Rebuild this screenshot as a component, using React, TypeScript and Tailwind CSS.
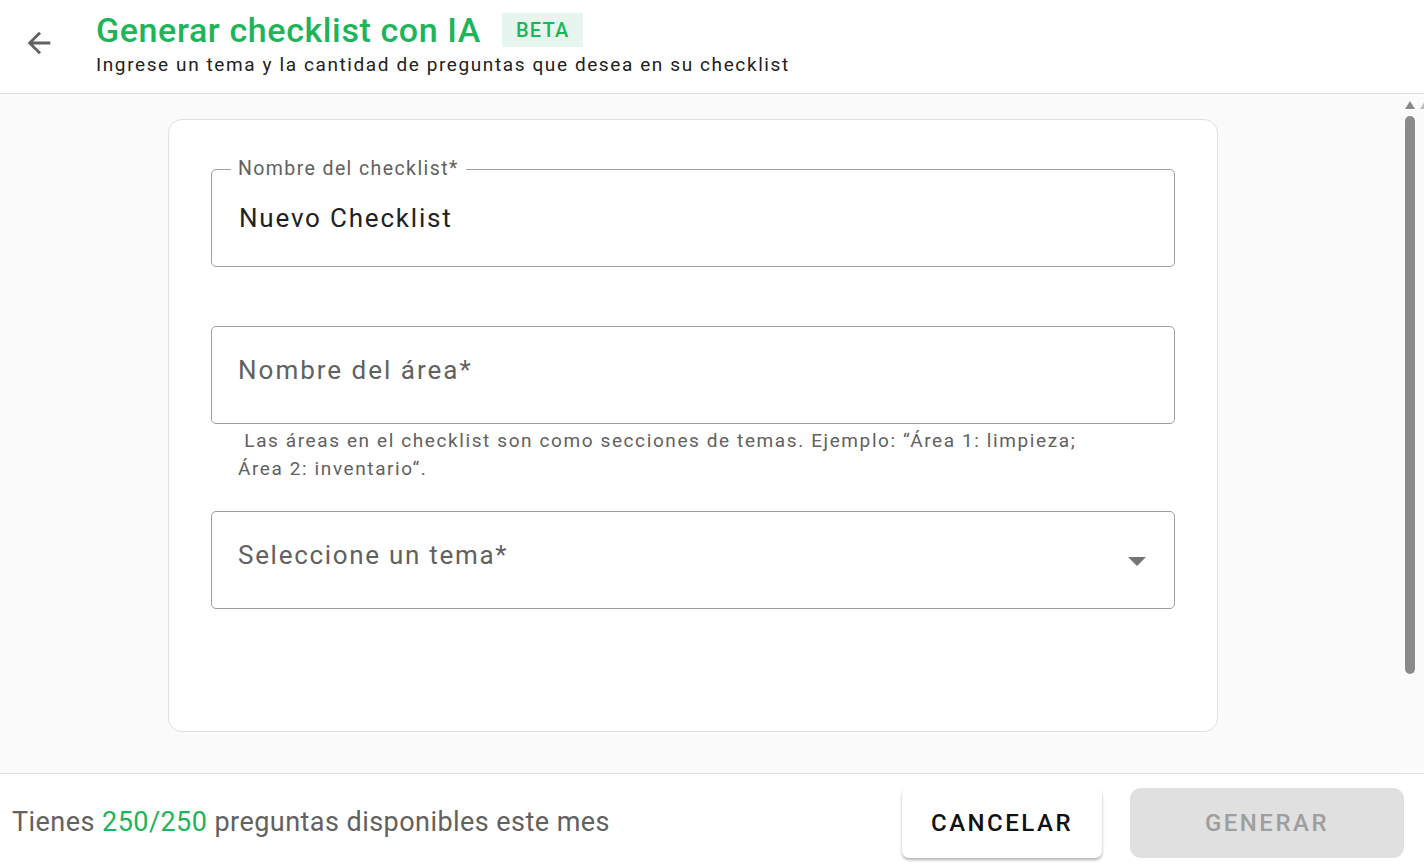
import React from 'react';

const green = 'text-[#1db45a]';

const ArrowBack = () => (
  <svg width="34" height="34" viewBox="0 0 24 24" fill="#616161">
    <path d="M20 11H7.83l5.59-5.59L12 4l-8 8 8 8 1.41-1.41L7.83 13H20v-2z" />
  </svg>
);

export default function App() {
  return (
    <div className="h-[866px] w-full flex flex-col bg-white font-['Roboto',sans-serif] overflow-hidden">
      {/* header */}
      <div className="h-[94px] shrink-0 flex items-start border-b border-[#e0e0e0]">
        <div className="pl-[22px] pt-[26px]">
          <ArrowBack />
        </div>
        <div className="pl-[40px] pt-[9px]">
          <div className="flex items-center gap-[21px]">
            <h1 className={`text-[34px] leading-[42px] font-medium tracking-[0.6px] ${green}`}>Generar checklist con IA</h1>
            <span className="px-[14px] h-[34px] flex items-center bg-[#e6f6ee] text-[20px] font-medium tracking-[1.2px] text-[#1db45a]">
              BETA
            </span>
          </div>
          <p className="text-[19px] leading-[26px] tracking-[1.6px] text-[#212121] mt-[1px]">
            Ingrese un tema y la cantidad de preguntas que desea en su checklist
          </p>
        </div>
      </div>

      {/* main */}
      <div className="relative flex-1 bg-[#fafafa] pt-[25px]">
        <div className="ml-[168px] w-[1050px] h-[613px] bg-white border border-[#e0e0e0] rounded-[14px] px-[42px] pt-[49px]">
          {/* checklist name */}
          <div className="relative h-[98px] border border-[#9e9e9e] rounded-[5px] flex items-center px-[27px]">
            <span className="absolute -top-[12px] left-[19px] bg-white px-[7px] text-[19.5px] leading-[22px] tracking-[1.4px] text-[#616161]">
              Nombre del checklist*
            </span>
            <span className="text-[26px] tracking-[1.8px] text-[#212121]">Nuevo Checklist</span>
          </div>

          {/* area name */}
          <div className="mt-[59px] h-[98px] border border-[#9e9e9e] rounded-[5px] flex items-center px-[26px]">
            <span className="text-[26px] tracking-[2px] text-[#616161] -mt-[10px]">Nombre del área*</span>
          </div>
          <p className="ml-[27px] mt-[3px] text-[19px] leading-[28px] tracking-[1.6px] text-[#616161]">
            &nbsp;Las áreas en el checklist son como secciones de temas. Ejemplo: “Área 1: limpieza;
            <br />
            Área 2: inventario“.
          </p>

          {/* tema select */}
          <div className="mt-[28px] h-[98px] border border-[#9e9e9e] rounded-[5px] flex items-center justify-between pl-[26px] pr-[27px]">
            <span className="text-[26px] tracking-[1.7px] text-[#616161] -mt-[10px]">Seleccione un tema*</span>
            <svg width="20" height="10" viewBox="0 0 20 10" className="mt-[1px]">
              <path d="M1 1h18l-9 9z" fill="#757575" />
            </svg>
          </div>
        </div>

        {/* scrollbar */}
        <div className="absolute right-0 top-0 bottom-0 w-[22px] bg-[#fbfbfb]">
          <svg width="10" height="8" viewBox="0 0 10 8" className="absolute left-[3px] top-[7px]">
            <path d="M0 8L5 0l5 8z" fill="#8a8a8a" />
          </svg>
          <svg width="10" height="8" viewBox="0 0 10 8" className="absolute left-[18px] top-[7px]">
            <path d="M0 8L5 0l5 8z" fill="#bdbdbd" />
          </svg>
          <div className="absolute left-[3px] top-[22px] w-[10px] h-[558px] rounded-full bg-[#8a8a8a]" />
        </div>
      </div>

      {/* footer */}
      <div className="h-[93px] shrink-0 border-t border-[#e0e0e0] flex items-center pt-[5px] pl-[12px] pr-[20px]">
        <p className="flex-1 text-[27px] tracking-[0.45px] text-[#616161]">
          Tienes <span className={green}>250/250</span> preguntas disponibles este mes
        </p>
        <button className="w-[200px] h-[70px] bg-white rounded-[7px] shadow-[0_2px_3px_rgba(0,0,0,0.3)] text-[24px] font-medium tracking-[2.5px] text-[#111]">
          CANCELAR
        </button>
        <button className="ml-[28px] w-[274px] h-[70px] bg-[#e0e0e0] rounded-[11px] text-[24px] font-medium tracking-[2.5px] text-[#9e9e9e]">
          GENERAR
        </button>
      </div>
    </div>
  );
}
